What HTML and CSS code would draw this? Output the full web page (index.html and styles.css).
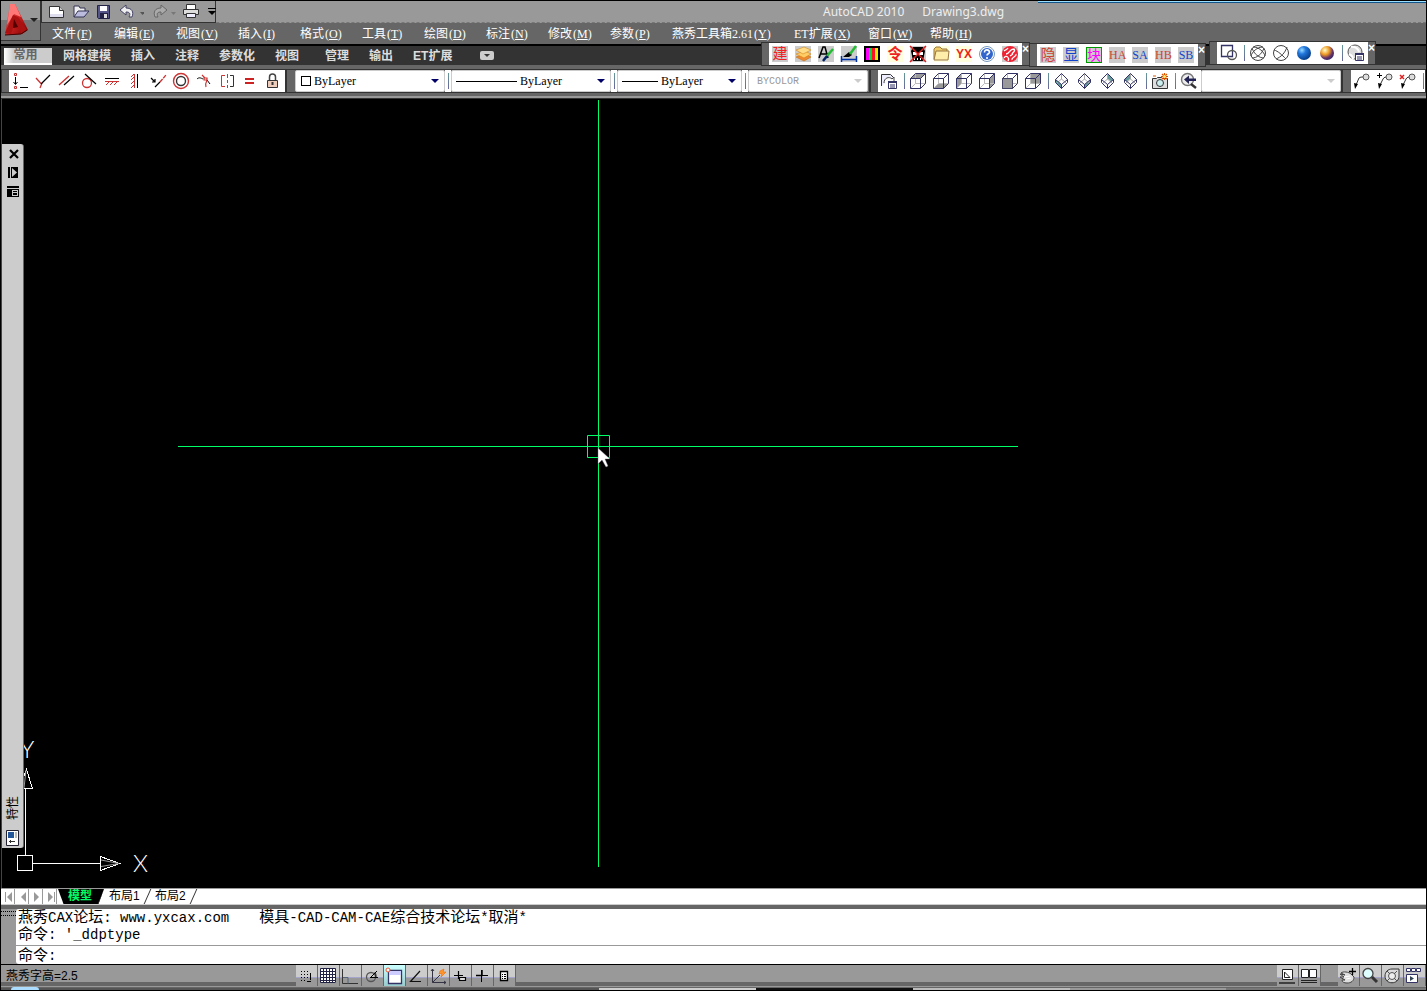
FILE: index.html
```html
<!DOCTYPE html>
<html lang="zh-CN">
<head>
    <meta charset="UTF-8">
    <meta name="viewport" content="width=device-width, initial-scale=1.0">
    <title>AutoCAD 2010 - Drawing3.dwg</title>
    <link rel="stylesheet" href="styles.css">
</head>
<body>

    <svg class="defs" width="0" height="0" aria-hidden="true">
        <symbol id="cubo" viewBox="0 0 23 22">
            <path d="M8.500 3.500v10h10M8.500 13.500l-5 5" fill="none" stroke="#bbb"/>
            <path d="M3.500 8.500h10v10h-10zM3.500 8.500l5-5h10l-5 5M18.500 3.500v10l-5 5" fill="none" stroke="#336"/>
        </symbol>
        <symbol id="iso" viewBox="0 0 23 22">
            <path d="M10.500 3.500v6M6 13l4.500-4 4.500 4" fill="none" stroke="#aaa"/>
            <path d="M10.500 3.500l6 6v3l-6 6-6-6v-3zM4.500 9.500l6 5 6-5M10.500 14.500v4" fill="none" stroke="#336"/>
        </symbol>
        <linearGradient id="rojo" x1="0" y1="0" x2="1" y2="1">
            <stop offset="0" stop-color="#f66"/><stop offset=".5" stop-color="#c22"/><stop offset="1" stop-color="#700"/>
        </linearGradient>
        <radialGradient id="azul" cx=".35" cy=".3" r=".8">
            <stop offset="0" stop-color="#9df"/><stop offset=".35" stop-color="#27d"/><stop offset="1" stop-color="#037"/>
        </radialGradient>
        <radialGradient id="oro" cx=".35" cy=".3" r=".8">
            <stop offset="0" stop-color="#ffc"/><stop offset=".4" stop-color="#e92"/><stop offset=".7" stop-color="#636"/><stop offset="1" stop-color="#226"/>
        </radialGradient>
    </svg>

    <div class="app">
        <header class="top">
            <button class="app-button" aria-label="AutoCAD">
                <svg width="39" height="39" viewBox="0 0 39 39">
                    <path d="M9 3h5l13 26-6 4-17 1z" fill="url(#rojo)"/>
                    <path d="M9 3h5l6 13-7-3-7 11z" fill="#f77"/>
                    <path d="M4 32l8-18 5 2 9 13-6 4-1-5-7-1-2 6z" fill="#a11"/>
                    <path d="M13 18l4 8-5 1z" fill="#500"/>
                    <path d="M4 34l16-1 6-4" fill="none" stroke="#400"/>
                    <path d="M29 17h8l-4 4z" fill="#222"/>
                </svg>
            </button>
            <div class="bars">
                <div class="title-bar">
                    <div class="quick">
                        <button aria-label="新建"><svg width="18" height="20" viewBox="0 0 18 20"><path d="M1.500 5.500h10l4 4v7h-14z" fill="#fff" stroke="#333"/><path d="M11.500 5.500v4h4" fill="#ccc" stroke="#333"/><path d="M2 13h13v3H2z" fill="#dde"/></svg></button>
                        <button aria-label="打开"><svg width="18" height="20" viewBox="0 0 18 20"><path d="M2 16V5h5l1 2h5v3" fill="#eee" stroke="#335"/><path d="M2 16l4-6h11l-5 6z" fill="#bbd" stroke="#335"/></svg></button>
                        <button aria-label="保存"><svg width="16" height="20" viewBox="0 0 16 20"><path d="M1.500 4.500h12v13h-11l-1-1z" fill="#558" stroke="#224"/><path d="M4 5h7v5H4z" fill="#fff"/><path d="M4 12h8v5H4z" fill="#224"/><path d="M8 13h3v4H8z" fill="#ddd"/></svg></button>
                        <button aria-label="放弃"><svg width="26" height="20" viewBox="0 0 26 20"><path d="M2 9l6-5v3c6 0 8 4 6 9h-3c2-4 0-5-3-5v3z" fill="#eee" stroke="#446"/><path d="M22 11h5l-2.500 3z" fill="#555"/></svg></button>
                        <button aria-label="重做"><svg width="26" height="20" viewBox="0 0 26 20"><path d="M17 9l-6-5v3c-6 0-8 4-6 9h3c-2-4 0-5 3-5v3z" fill="#aaa" stroke="#666"/><path d="M21 11h5l-2.500 3z" fill="#777"/></svg></button>
                        <button aria-label="打印"><svg width="18" height="20" viewBox="0 0 18 20"><path d="M4.500 3.500h9v5h-9z" fill="#fff" stroke="#333"/><path d="M1.500 8.500h15v5h-15z" fill="#ddd" stroke="#333"/><path d="M4.500 12.500h9v4h-9z" fill="#eef" stroke="#333"/></svg></button>
                        <button aria-label="自定义"><svg width="12" height="20" viewBox="0 0 12 20"><path d="M2 7h8v1H2zM2 10h8l-4 4z" fill="#000"/></svg></button>
                    </div>
                    <h1 class="title"><span>AutoCAD 2010</span><span>Drawing3.dwg</span></h1>
                </div>
                <nav class="menu">
                    <button>文件<span>(<u>F</u>)</span></button>
                    <button>编辑<span>(<u>E</u>)</span></button>
                    <button>视图<span>(<u>V</u>)</span></button>
                    <button>插入<span>(<u>I</u>)</span></button>
                    <button>格式<span>(<u>O</u>)</span></button>
                    <button>工具<span>(<u>T</u>)</span></button>
                    <button>绘图<span>(<u>D</u>)</span></button>
                    <button>标注<span>(<u>N</u>)</span></button>
                    <button>修改<span>(<u>M</u>)</span></button>
                    <button>参数<span>(<u>P</u>)</span></button>
                    <button class="long">燕秀工具箱2.61<span>(<u>Y</u>)</span></button>
                    <button>ET扩展<span>(<u>X</u>)</span></button>
                    <button>窗口<span>(<u>W</u>)</span></button>
                    <button>帮助<span>(<u>H</u>)</span></button>
                </nav>
            </div>
        </header>

        <nav class="ribbon">
            <button class="active">常用</button>
            <button>网格建模</button>
            <button>插入</button>
            <button>注释</button>
            <button>参数化</button>
            <button class="wide">视图</button>
            <button>管理</button>
            <button>输出</button>
            <button>ET扩展</button>
            <button class="ribbon-min" aria-label="最小化"></button>
        </nav>

        <!-- Barras flotantes -->
        <div class="floating float-yx">
            <div class="tools">
                <button class="tool"><b class="glyph red">建</b></button>
                <button class="tool" aria-label="图层"><svg width="23" height="22" viewBox="0 0 23 22"><path d="M3 3h16v16H3z" fill="#ccc"/><path d="M4 14l9-3 6 3-7 4z" fill="#e83" stroke="#b60" stroke-width=".5"/><path d="M4 11l9-3 6 3-7 4z" fill="#fc6" stroke="#c70" stroke-width=".5"/><path d="M4 7l8-3 7 3-8 4z" fill="#fd8" stroke="#c70" stroke-width=".5"/></svg></button>
                <button class="tool" aria-label="文字样式"><svg width="23" height="22" viewBox="0 0 23 22"><path d="M3 3h16v16H3z" fill="#ccc"/><path d="M4 15l4-11h2l3 11M5 11h8" fill="none" stroke="#000" stroke-width="1.500"/><path d="M12 13l6-7" stroke="#2b3" stroke-width="2.500"/><path d="M8 18l4-5" stroke="#026" stroke-width="2.500"/></svg></button>
                <button class="tool" aria-label="标注样式"><svg width="23" height="22" viewBox="0 0 23 22"><path d="M3 3h16v16H3z" fill="#ccc"/><path d="M3.500 13v6M18.500 13v6M4 16.500h14" stroke="#03a" stroke-width="1.500"/><path d="M5 14l6-5 3 3-3 2z" fill="#000"/><path d="M12 11l6-8" stroke="#2b3" stroke-width="2.500"/></svg></button>
                <button class="tool" aria-label="颜色"><svg width="23" height="22" viewBox="0 0 23 22"><path d="M3 3h16v16H3z"/><path d="M5 5h3v12H5z" fill="#f0f"/><path d="M8 5h3v12H8z" fill="#0d3"/><path d="M11 5h3v12h-3z" fill="#f12"/><path d="M14 5h3v12h-3z" fill="#ee0"/></svg></button>
                <button class="tool"><b class="glyph red cream bold">令</b></button>
                <button class="tool" aria-label="清理"><svg width="23" height="22" viewBox="0 0 23 22"><path d="M3 3h16v16H3z" fill="#ccc"/><path d="M6 4h10l2 4-2 10H6L4 8z"/><path d="M6 9h4v3H6zM12 9h4v3h-4zM7 15h1v2H7zm3 0h1v2h-1zm3 0h1v2h-1z" fill="#fff"/><path d="M3 3l16 16M19 3L3 19" stroke="#d22" stroke-width="1.500"/></svg></button>
                <button class="tool" aria-label="文件夹"><svg width="23" height="22" viewBox="0 0 23 22"><path d="M3 3h16v16H3z" fill="#ffd"/><path d="M4 16V6l2-2h4l2 2h5v10z" fill="#ec6" stroke="#974"/><path d="M6 8h13l-1 9H4z" fill="#fea" stroke="#974"/></svg></button>
                <button class="tool"><b class="glyph red cream bold small">YX</b></button>
                <button class="tool" aria-label="帮助"><svg width="23" height="22" viewBox="0 0 23 22"><circle cx="11" cy="11" r="7.500" fill="#fff" stroke="#79b"/><circle cx="11" cy="11" r="6" fill="#36c"/><path d="M8.500 9.500c0-4 5-3 5 0 0 1-2.500 1-2.500 3M11 14v2" fill="none" stroke="#fff" stroke-width="1.600"/></svg></button>
                <button class="tool" aria-label="燕秀"><svg width="23" height="22" viewBox="0 0 23 22"><path d="M3 3h16v16H3z" fill="#ccc"/><circle cx="11" cy="11" r="8" fill="#e23"/><path d="M5 8c2-2 3-1 4-3M7 11c4 0 3-5 8-5 2 2-1 3-2 5M5 15c2-4 6 0 4 3M13 17c-1-3 5-3 4-6M11 13l3-2" fill="none" stroke="#fff" stroke-width="1.300"/></svg></button>
            </div>
            <button class="close" aria-label="关闭">×</button>
        </div>
        <div class="floating float-sel">
            <div class="tools">
                <button class="tool"><b class="glyph brick">隐</b></button>
                <button class="tool"><b class="glyph blue">显</b></button>
                <button class="tool"><b class="glyph pink boxed">块</b></button>
                <button class="tool"><b class="glyph brick serif">HA</b></button>
                <button class="tool"><b class="glyph blue serif">SA</b></button>
                <button class="tool"><b class="glyph brick serif">HB</b></button>
                <button class="tool"><b class="glyph blue serif">SB</b></button>
            </div>
            <button class="close" aria-label="关闭">×</button>
        </div>
        <div class="floating float-vis">
            <div class="tools">
                <button class="tool" aria-label="二维线框"><svg width="23" height="22" viewBox="0 0 23 22"><path d="M3.500 3.500h11v11h-11z" fill="none" stroke="#336" stroke-width="1.300"/><circle cx="14" cy="13" r="4.500" fill="none" stroke="#555" stroke-width="1.300"/></svg></button>
                <i class="sep"></i>
                <button class="tool" aria-label="三维线框"><svg width="23" height="22" viewBox="0 0 23 22"><g fill="none" stroke="#444"><circle cx="11" cy="11" r="7.500"/><path d="M5 6c2 6 7 10 12 10M17 6c-2 6-7 10-12 10M6 5c6 0 11 5 12 9M16 5C10 5 5 10 4 14"/></g></svg></button>
                <button class="tool" aria-label="三维隐藏"><svg width="23" height="22" viewBox="0 0 23 22"><g fill="none" stroke="#444"><circle cx="11" cy="11" r="7.500"/><path d="M4 8c4 1 8 5 12 9M17 5c-2 6-6 10-11 12"/></g></svg></button>
                <button class="tool" aria-label="真实"><svg width="23" height="22" viewBox="0 0 23 22"><circle cx="11" cy="11" r="7" fill="url(#azul)"/></svg></button>
                <button class="tool" aria-label="概念"><svg width="23" height="22" viewBox="0 0 23 22"><circle cx="11" cy="11" r="7" fill="url(#oro)"/></svg></button>
                <i class="sep"></i>
                <button class="tool" aria-label="管理视觉样式"><svg width="23" height="22" viewBox="0 0 23 22"><circle cx="10" cy="10" r="7" fill="#ddd" stroke="#555"/><path d="M6 5c3-1 7 1 8 5M4 12c2 1 4 3 4 5" fill="none" stroke="#fff" stroke-width="2"/><path d="M10.500 11.500h8v7h-8z" fill="#fff" stroke="#336"/><path d="M10 11h9v2h-9zM12 14.500h5v1h-5zM12 16.500h5v1h-5z" fill="#336"/></svg></button>
            </div>
            <button class="close" aria-label="关闭">×</button>
        </div>

        <div class="toolbars">
            <div class="toolbar">
                <div class="tools">
                    <button class="tool" aria-label="重合"><svg width="23" height="22" viewBox="0 0 23 22"><path d="M5.500 3.500h2v2h-2zM5.500 16.500h2v2h-2z" fill="none" stroke="#c33"/><path d="M6.500 7v7M4.500 12l2 2.500 2-2.500M11 17.500h8" fill="none" stroke="#000"/></svg></button>
                    <button class="tool" aria-label="垂直"><svg width="23" height="22" viewBox="0 0 23 22"><path d="M4 8l5 5.500M8 18l2-5" stroke="#c33" stroke-width="1.300"/><path d="M18 5l-9 9" stroke="#000" stroke-width="1.200"/></svg></button>
                    <button class="tool" aria-label="平行"><svg width="23" height="22" viewBox="0 0 23 22"><path d="M4 15l10-9" stroke="#c33" stroke-width="1.400"/><path d="M9 15l10-9" stroke="#000" stroke-width="1.200"/></svg></button>
                    <button class="tool" aria-label="相切"><svg width="23" height="22" viewBox="0 0 23 22"><circle cx="9" cy="13" r="4.500" fill="none" stroke="#c33" stroke-width="1.300"/><path d="M7 4l11 10" stroke="#000" stroke-width="1.200"/></svg></button>
                    <button class="tool" aria-label="水平"><svg width="23" height="22" viewBox="0 0 23 22"><path d="M4 8.500h14" stroke="#000"/><path d="M4 11.500h14M8 12l-3 3M12 12l-3 3M16 12l-3 3" stroke="#c33"/></svg></button>
                    <button class="tool" aria-label="竖直"><svg width="23" height="22" viewBox="0 0 23 22"><path d="M10.500 4v14M10 7l-3 3M10 11l-3 3M10 15l-3 3M10 4L7 7" stroke="#c33"/><path d="M13.500 4v14" stroke="#000"/></svg></button>
                    <button class="tool" aria-label="共线"><svg width="23" height="22" viewBox="0 0 23 22"><path d="M4 8l4 4M5 12h3V9M8 17l5-5" fill="none" stroke="#000" stroke-width="1.200"/><path d="M13 12l6-7" stroke="#c33" stroke-width="1.300" stroke-dasharray="4 1"/></svg></button>
                    <button class="tool" aria-label="同心"><svg width="23" height="22" viewBox="0 0 23 22"><circle cx="11" cy="11" r="7.500" fill="none" stroke="#c33" stroke-width="1.400"/><circle cx="11" cy="11" r="4.500" fill="none" stroke="#333" stroke-width="1.400"/></svg></button>
                    <button class="tool" aria-label="平滑"><svg width="23" height="22" viewBox="0 0 23 22"><path d="M4 9c2-2 4-1 6 0M14 10l3 4" fill="none" stroke="#000"/><path d="M9 5l3 3M11 8h3v2h-3zM14 10c-1 2-2 4-1 7" fill="none" stroke="#c33" stroke-width="1.200"/></svg></button>
                    <button class="tool" aria-label="对称"><svg width="23" height="22" viewBox="0 0 23 22"><path d="M9 5.500H5.500v11H9M11.500 4v4M11.500 10v3M11.500 15v3" fill="none" stroke="#c33"/><path d="M14 5.500h3.500v11H14" fill="none" stroke="#333"/></svg></button>
                    <button class="tool" aria-label="相等"><svg width="23" height="22" viewBox="0 0 23 22"><path d="M6 9h9M6 13h9" stroke="#c22" stroke-width="2"/></svg></button>
                    <button class="tool" aria-label="固定"><svg width="23" height="22" viewBox="0 0 23 22"><path d="M7.500 11V7c0-4 6-4 6 0v4" fill="none" stroke="#444" stroke-width="1.500"/><path d="M5.500 10.500h10v7h-10z" fill="#ecb" stroke="#333"/><path d="M10.500 12v3" stroke="#333" stroke-width="2"/></svg></button>
                </div>
            </div>

            <div class="toolbar props">
                <label class="combo color"><i class="swatch"></i><select aria-label="颜色"><option>ByLayer</option></select></label>
                <i class="sep"></i>
                <label class="combo line"><i class="stroke"></i><select aria-label="线型"><option>ByLayer</option></select></label>
                <i class="sep"></i>
                <label class="combo weight"><i class="stroke"></i><select aria-label="线宽"><option>ByLayer</option></select></label>
                <i class="sep"></i>
                <label class="combo plot off"><select aria-label="打印样式" disabled><option>BYCOLOR</option></select></label>
            </div>

            <div class="toolbar">
                <div class="tools">
                    <button class="tool" aria-label="命名视图"><svg width="23" height="22" viewBox="0 0 23 22"><path d="M3.500 16V4.500h9l3 3" fill="#eef" stroke="#333"/><path d="M6 13c0-5 5-7 8-4l2-2v6h-6l2-2" fill="#fff" stroke="#444"/><path d="M10.500 11.500h8v7h-8z" fill="#fff" stroke="#336"/><path d="M10 11h9v2h-9zM12 14.500h5v1h-5zM12 16.500h5v1h-5z" fill="#336"/></svg></button>
                    <i class="sep"></i>
                    <button class="tool" aria-label="俯视"><svg width="23" height="22" viewBox="0 0 23 22"><path d="M3.500 8.500l5-5h10l-5 5z" fill="#999"/><use href="#cubo"/></svg></button>
                    <button class="tool" aria-label="仰视"><svg width="23" height="22" viewBox="0 0 23 22"><path d="M3.500 18.500l5-5h10l-5 5z" fill="#999"/><use href="#cubo"/></svg></button>
                    <button class="tool" aria-label="左视"><svg width="23" height="22" viewBox="0 0 23 22"><path d="M3.500 8.500l5-5v10l-5 5z" fill="#999"/><use href="#cubo"/></svg></button>
                    <button class="tool" aria-label="右视"><svg width="23" height="22" viewBox="0 0 23 22"><path d="M13.500 8.500l5-5v10l-5 5z" fill="#999"/><use href="#cubo"/></svg></button>
                    <button class="tool" aria-label="前视"><svg width="23" height="22" viewBox="0 0 23 22"><use href="#cubo"/><path d="M3.500 8.500h10v10h-10z" fill="#999" stroke="#446"/></svg></button>
                    <button class="tool" aria-label="后视"><svg width="23" height="22" viewBox="0 0 23 22"><path d="M8.500 3.500h10v10h-10z" fill="#999"/><use href="#cubo"/></svg></button>
                    <i class="sep"></i>
                    <button class="tool" aria-label="西南等轴测"><svg width="23" height="22" viewBox="0 0 23 22"><path d="M4.500 9.500l6 5v4l-6-6z" fill="#699"/><use href="#iso"/></svg></button>
                    <button class="tool" aria-label="东南等轴测"><svg width="23" height="22" viewBox="0 0 23 22"><path d="M16.500 9.500l-6 5v4l6-6z" fill="#699"/><use href="#iso"/></svg></button>
                    <button class="tool" aria-label="东北等轴测"><svg width="23" height="22" viewBox="0 0 23 22"><path d="M10.500 3.500l6 6-2 2-4-3z" fill="#699"/><use href="#iso"/></svg></button>
                    <button class="tool" aria-label="西北等轴测"><svg width="23" height="22" viewBox="0 0 23 22"><path d="M10.500 3.500l-6 6 2 2 4-3z" fill="#699"/><use href="#iso"/></svg></button>
                    <i class="sep"></i>
                    <button class="tool" aria-label="相机"><svg width="23" height="22" viewBox="0 0 23 22"><path d="M3.500 8.500h4l1-1h4l1 1h5v10h-15z" fill="#ddd" stroke="#333"/><circle cx="11" cy="13" r="3.500" fill="#cee" stroke="#333"/><path d="M4 6h3M15.500 3v7M12 6.500h7M13 4l5 5M18 4l-5 5" stroke="#d50" stroke-width="1.200"/><circle cx="15.500" cy="6.500" r="1.500" fill="#fe6"/></svg></button>
                    <i class="sep"></i>
                    <button class="tool" aria-label="上一个"><svg width="23" height="22" viewBox="0 0 23 22"><circle cx="9.500" cy="9.500" r="6" fill="#eee" stroke="#777" stroke-width="1.400"/><path d="M13 14l5 4" stroke="#333" stroke-width="2.500"/><path d="M6 9.500l5-4v3h7v2.500h-7v3z" fill="#225"/></svg></button>
                </div>
                <label class="combo view off"><select aria-label="视图" disabled><option></option></select></label>
            </div>

            <div class="toolbar last">
                <div class="tools">
                    <button class="tool" aria-label="多重引线"><svg width="23" height="22" viewBox="0 0 23 22"><path d="M5 15l3-7c1-1 3-1 4-1" fill="none" stroke="#333"/><path d="M3 13l4 1-3 5z"/><circle cx="15" cy="7" r="3" fill="#ddd" stroke="#555"/></svg></button>
                    <button class="tool" aria-label="添加引线"><svg width="23" height="22" viewBox="0 0 23 22"><path d="M3 5.500h5M5.500 3v5" stroke="#000"/><path d="M6 15l3-6c1-2 3-2 4-2" fill="none" stroke="#333"/><path d="M4 13l4 1-3 5z"/><circle cx="15" cy="7" r="3" fill="#ddd" stroke="#555"/></svg></button>
                    <button class="tool" aria-label="删除引线"><svg width="23" height="22" viewBox="0 0 23 22"><path d="M3 5l4 4M7 5L3 9" stroke="#d22" stroke-width="1.500"/><path d="M6 15l3-6c1-2 3-2 4-2" fill="none" stroke="#333"/><path d="M4 13l4 1-3 5z"/><circle cx="15" cy="7" r="3" fill="#ddd" stroke="#555"/></svg></button>
                    <i class="sep"></i>
                </div>
            </div>
        </div>

        <main class="canvas">
            <svg class="crosshair" width="841" height="768" viewBox="0 0 841 768">
                <path d="M0 346h840v1H0zM420 0h1v767h-1z" fill="#00ff66"/>
                <path d="M409.500 335.500h22v22h-22z" fill="none" stroke="#00ff66"/>
                <path d="M420 348v16l4-4 4 7 2-1-3-7h5z" fill="#fff" stroke="#667" stroke-width=".4"/>
            </svg>

            <svg class="ucs" width="140" height="140" viewBox="0 0 140 140">
                <g fill="none" stroke="#fff">
                    <path d="M1.500 117.500h15v15h-15zM9.500 117V50M17 125.500h67M84.500 118.500v14l19-7zM3.500 50.500h13l-6-19z" shape-rendering="crispEdges"/>
                    <path d="M85 122l18 3.500-18 3M8 50l2-18" stroke="#999"/>
                </g>
                <text x="117" y="134">X</text>
                <text x="4" y="20">Y</text>
            </svg>

            <aside class="palette">
                <button aria-label="关闭"><svg width="14" height="18" viewBox="0 0 14 18"><path d="M4 6l8 8M12 6l-8 8" stroke="#000" stroke-width="2.200"/></svg></button>
                <button aria-label="自动隐藏"><svg width="14" height="18" viewBox="0 0 14 18"><path d="M2 4h2v11H2zM5 4h7v11H5z"/><path d="M6 5l5 4.500-5 4.500z" fill="#ccc"/></svg></button>
                <button aria-label="特性"><svg width="14" height="18" viewBox="0 0 14 18"><path d="M1 4h12v2H1zM1 7h12v8H1z"/><path d="M7 8h5v1H7zM7 10h5v1H7zM7 13h5v1H7zM6 8h1v6H6zM12 8v6h-1V8z" fill="#ccc"/></svg></button>
                <span class="palette-name">特性</span>
                <svg class="palette-icon" width="14" height="18" viewBox="0 0 14 18"><path d="M.5 1.500h12v15H.5z" fill="#fff" stroke="#223"/><path d="M2 3h6v6H2z" fill="#259"/><path d="M9 3h2v6H9z" fill="#bbb"/><path d="M3 12.500h6M4.500 11v3" stroke="#333"/></svg>
            </aside>
        </main>

        <nav class="layouts">
            <button class="step" aria-label="第一个"><svg width="14" height="14" viewBox="0 0 14 14"><path d="M4 2h1v10H4zM11 2v10L6 7z" fill="#999"/></svg></button>
            <button class="step" aria-label="上一个"><svg width="14" height="14" viewBox="0 0 14 14"><path d="M11 2v10L6 7z" fill="#999"/></svg></button>
            <button class="step" aria-label="下一个"><svg width="14" height="14" viewBox="0 0 14 14"><path d="M5 2v10l5-5z" fill="#999"/></svg></button>
            <button class="step" aria-label="最后一个"><svg width="14" height="14" viewBox="0 0 14 14"><path d="M5 2v10l5-5zM11 2h1v10h-1z" fill="#999"/></svg></button>
            <button class="layout current">模型</button>
            <button class="layout">布局1</button>
            <button class="layout">布局2</button>
        </nav>

        <section class="command">
            <div class="grip"></div>
            <div class="console">
                <p>燕秀<span>CAX</span>论坛<span>: www.yxcax.com</span><b class="forum">模具<span>-CAD-CAM-CAE</span>综合技术论坛<span>*</span>取消<span>*</span></b></p>
                <p>命令<span>: '_ddptype</span></p>
                <label class="prompt">命令<span>:</span><input type="text" aria-label="命令"></label>
            </div>
        </section>

        <footer class="status">
            <div class="coords">燕秀字高=2.5</div>
            <div class="group">
                <button aria-label="捕捉"><svg width="21" height="20" viewBox="0 0 21 20"><path d="M5 5.500h9M5 8.500h9M5 11.500h9M5 14.500h6" stroke="#000" stroke-dasharray="1 2"/><path d="M14.500 7v7M11 15.500h4" stroke="#000"/></svg></button>
                <button aria-label="栅格"><svg width="21" height="20" viewBox="0 0 21 20"><path d="M3 3h15v14H3z" fill="#fff"/><path d="M2.500 2.500h15v14h-15zM5.500 2v15M8.500 2v15M11.500 2v15M14.500 2v15M2 5.500h16M2 8.500h16M2 11.500h16M2 14.500h16" fill="none" stroke="#224"/></svg></button>
                <button aria-label="正交"><svg width="21" height="20" viewBox="0 0 21 20"><path d="M2.500 3v14.500H18" fill="none" stroke="#333"/><path d="M3 11.500h5v6" fill="none" stroke="#567"/></svg></button>
                <button aria-label="极轴"><svg width="21" height="20" viewBox="0 0 21 20"><circle cx="9" cy="11" r="4.500" fill="none" stroke="#555" stroke-width="1.300"/><path d="M9 11.500h7M8 12l7-7M13 6c1 2 1 4 1 5" fill="none" stroke="#000"/></svg></button>
                <button class="on" aria-label="对象捕捉"><svg width="21" height="20" viewBox="0 0 21 20"><path d="M4.500 4.500h13v13h-13z" fill="#fff" stroke="#336" stroke-width="1.300"/><path d="M5 5h12v4H5z" fill="#ccf"/><circle cx="4" cy="4" r="2" fill="#fff" stroke="#e53"/></svg></button>
                <button aria-label="对象追踪"><svg width="21" height="20" viewBox="0 0 21 20"><path d="M14 5L4.500 15.500H15" fill="none" stroke="#111" stroke-width="1.200"/></svg></button>
                <button aria-label="动态UCS"><svg width="21" height="20" viewBox="0 0 21 20"><path d="M4.500 3v13.500H18M4.500 16.500L12 9M3 5l1.500-2L6 5M16 15l2 1.500-2 1.500" fill="none" stroke="#334"/><path d="M12 5l4-2-1 3h3l-5 5 1-4-3 1z" fill="#f93" stroke="#e60" stroke-width=".6"/></svg></button>
                <button aria-label="动态输入"><svg width="21" height="20" viewBox="0 0 21 20"><path d="M4 9.500h9M8.500 5v8" stroke="#000" stroke-width="1.200"/><path d="M9.500 11.500h6v3h-6z" fill="#ddd" stroke="#000" stroke-width="1.200"/></svg></button>
                <button aria-label="线宽"><svg width="21" height="20" viewBox="0 0 21 20"><path d="M4 9.500h12M9.500 4v12" stroke="#000"/><path d="M4 9.500h6V4" fill="none" stroke="#000" stroke-width="1.500"/></svg></button>
                <button aria-label="快捷特性"><svg width="21" height="20" viewBox="0 0 21 20"><path d="M6.500 5.500h7v9h-7z" fill="#fff" stroke="#000" stroke-width="1.300"/><path d="M8 8.500h1M10 8.500h2M8 10.500h1M10 10.500h2M8 12.500h1M10 12.500h2" stroke="#000"/></svg></button>
            </div>
            <div class="group right">
                <button aria-label="模型"><svg width="21" height="20" viewBox="0 0 21 20"><path d="M5.500 3.500h10v10h-10z" fill="#fff" stroke="#222"/><path d="M7.500 6v5.500H13z" fill="none" stroke="#222"/><path d="M2 17h16" stroke="#222" stroke-width="1.500"/></svg></button>
                <button aria-label="快速查看布局"><svg width="21" height="20" viewBox="0 0 21 20"><path d="M2.500 3.500h7v8h-7zM10.500 3.500h7v8h-7z" fill="#fff" stroke="#222"/><path d="M2 14.500h16M2 16.500h16" stroke="#222"/></svg></button>
            </div>
            <div class="group">
                <button aria-label="平移"><svg width="21" height="20" viewBox="0 0 21 20"><path d="M2 8l5 1-4-2c2-2 8-1 10 1l3 3c0 4-3 6-7 6-3 0-5-1-5-3h3l-5-3h4z" fill="#ddd" stroke="#444"/><path d="M6 11l6-1M8 13l5-1" stroke="#fff"/><path d="M11 5.500h7M14.500 2v7" stroke="#000" stroke-width="1.300"/></svg></button>
                <button aria-label="缩放"><svg width="21" height="20" viewBox="0 0 21 20"><circle cx="8" cy="7.500" r="5" fill="#dff" stroke="#444" stroke-width="1.300"/><path d="M12 11l5 5" stroke="#333" stroke-width="3"/></svg></button>
                <button aria-label="控制盘"><svg width="21" height="20" viewBox="0 0 21 20"><path d="M10 3h7v7c0 9-14 9-14 0 0-4 3-7 7-7z" fill="#ddd" stroke="#333"/><circle cx="10" cy="10" r="3.500" fill="#eee" stroke="#555"/><path d="M5 5l3 3M15 5l-3 3M5 15l3-3M15 15l-3-3" stroke="#555"/></svg></button>
                <button aria-label="运动"><svg width="21" height="20" viewBox="0 0 21 20"><path d="M2.500 2.500h4v3h-4zM7.500 2.500h4v3h-4zM12.500 2.500h4v3h-4zM2.500 8.500h11v8h-11z" fill="#fff" stroke="#336"/><path d="M6 10v5l4-2.500z" fill="#345"/></svg></button>
            </div>
        </footer>
        <div class="taskbar"><i class="orb"></i></div>
    </div>

</body>
</html>
```
FILE: styles.css
```css
* {
    box-sizing: border-box;
}
body {
    margin: 0;
    background-color: #000;
    font-family: "Liberation Sans", "Noto Sans CJK SC", sans-serif;
    font-size: 12px;
}
button {
    margin: 0;
    padding: 0;
    border: none;
    background: none;
    color: inherit;
    font: inherit;
    white-space: nowrap;
}
svg {
    display: block;
}
.defs {
    position: absolute;
}
.app {
    position: relative;
    display: flex;
    flex-direction: column;
    height: 100vh;
    border: 1px solid #000;
    background-color: #666;
    overflow: hidden;
}
/* Borde de la ventana de atrás */
.app::before {
    content: "";
    position: absolute;
    top: 0;
    right: 0;
    width: 388px;
    height: 2px;
    background: linear-gradient(#9df 0 1px, #158 1px);
}

/* Título y menú */
.top {
    display: flex;
    height: 43px;
    flex: none;
}
.app-button {
    width: 40px;
    height: 40px;
    background: linear-gradient(#999 0 50%, #777 50%);
    border: 1px solid #333;
    border-left: none;
    border-top: none;
}
.bars {
    flex: 1;
}
.title-bar {
    display: flex;
    align-items: center;
    height: 22px;
    background-color: #999;
    border-bottom: 1px dashed #777;
}
.quick {
    display: flex;
    align-items: center;
    gap: 6px;
    width: 175px;
    height: 22px;
    padding-left: 6px;
    border: 1px solid #333;
    border-top: none;
}
.title {
    display: flex;
    gap: 18px;
    margin: 0 0 0 607px;
    color: #eee;
    font: 12px "Noto Sans", sans-serif;
}
.menu {
    display: flex;
    gap: 20px;
    height: 20px;
    padding-left: 11px;
    color: #fff;
    font-family: "Liberation Serif", "Noto Sans CJK SC", serif;
}
.menu button {
    width: 42px;
    text-align: left;
}
.menu button.long {
    width: 102px;
}
.menu .long + button {
    width: 54px;
}
.menu span {
    padding-left: 1px;
}

/* Cinta */
.ribbon {
    display: flex;
    gap: 20px;
    flex: none;
    height: 21px;
    padding-left: 3px;
    border-top: 2px solid #000;
    background-color: #333;
    color: #ddd;
    font-weight: bold;
}
.ribbon button {
    height: 17px;
}
.ribbon .active {
    align-self: flex-end;
    width: 48px;
    height: 17px;
    margin-right: -9px;
    padding-right: 5px;
    background: linear-gradient(90deg, #fff, #ccc 20%);
    border-bottom: 2px solid #fff;
    color: #666;
    line-height: 15px;
}
.ribbon .wide {
    margin-right: 6px;
}
.ribbon .ribbon-min {
    align-self: center;
    width: 14px;
    height: 9px;
    margin-left: 8px;
    border-radius: 2px;
    background-color: #ccc;
}
.ribbon-min::after {
    content: "";
    display: block;
    width: 0;
    margin: 0 auto;
    border: 3px solid transparent;
    border-top-color: #333;
    border-bottom: none;
}

/* Barras de herramientas */
.toolbars {
    display: flex;
    flex: none;
    height: 34px;
    padding-top: 4px;
    border-bottom: 1px solid #333;
    background: linear-gradient(#666 0 28px, #666 31px, #999 31px);
}
.toolbar {
    display: flex;
    height: 24px;
    padding-left: 7px;
    border: 1px solid #333;
    flex: none;
}
.toolbar.last {
    flex: 1;
    padding-left: 8px;
    overflow: hidden;
}
.tools {
    display: flex;
    flex: none;
    background-color: #fff;
}
.last .tools {
    width: 100%;
}
.tool {
    width: 23px;
    height: 22px;
}
.sep {
    width: 6px;
    height: 22px;
    flex: none;
    background: linear-gradient(#699, #669) center / 1px 16px no-repeat #fff;
}
.combo {
    position: relative;
    display: flex;
    align-items: center;
    height: 22px;
    background-color: #fff;
    border: 1px solid #ccc;
    border-radius: 2px;
}
.combo::after {
    content: "";
    position: absolute;
    right: 5px;
    border: 4px solid transparent;
    border-top-color: #006;
    border-bottom: none;
}
.combo select {
    flex: 1;
    height: 20px;
    padding: 0 0 0 3px;
    appearance: none;
    border: none;
    background: none;
    color: #000;
    font: 12px "Liberation Serif", serif;
}
.combo.off::after {
    border-top-color: #ccc;
}
.combo.off select {
    padding-left: 8px;
    color: #999;
    font: 10px "Liberation Mono", monospace;
    opacity: 1;
}
.swatch {
    width: 10px;
    height: 10px;
    margin-left: 5px;
    border: 1px solid #000;
}
.stroke {
    height: 1px;
    margin-left: 4px;
    background-color: #000;
}
.props {
    padding-left: 8px;
    padding-right: 1px;
}
.color {
    width: 150px;
}
.line {
    width: 160px;
}
.line .stroke {
    width: 61px;
}
.weight {
    width: 125px;
}
.weight .stroke {
    width: 36px;
}
.plot {
    width: 120px;
}
.view {
    width: 140px;
}

.floating {
    position: absolute;
    z-index: 2;
    display: flex;
    height: 24px;
    padding-left: 7px;
    border: 1px solid #333;
    background-color: #666;
}
.float-yx {
    left: 760px;
    top: 41px;
}
.float-sel {
    left: 1028px;
    top: 42px;
}
.float-vis {
    left: 1208px;
    top: 40px;
}
.float-vis .tools {
    padding-left: 1px;
}
.close {
    align-self: flex-start;
    width: 7px;
    color: #fff;
    font-size: 12px;
    font-weight: bold;
    line-height: 12px;
}
.glyph {
    display: block;
    width: 16px;
    height: 16px;
    margin-left: 3px;
    background-color: #ccc;
    font-size: 15px;
    font-weight: normal;
    line-height: 16px;
}
.serif {
    font-family: "Liberation Serif", serif;
    font-size: 12px;
}
.bold {
    font-weight: bold;
}
.small {
    font-size: 12px;
}
.cream {
    background-color: #ffd;
}
.red {
    color: #e22;
}
.brick {
    color: #c43;
}
.blue {
    color: #14c;
}
.pink {
    color: #f0f;
}
.boxed {
    border: 1px solid #090;
    font-size: 14px;
    line-height: 14px;
}

/* Área de dibujo */
.canvas {
    position: relative;
    flex: 1;
    min-height: 0;
    border-left: 1px solid #444;
    background-color: #000;
    overflow: hidden;
}
.crosshair {
    position: absolute;
    left: 176px;
    top: 1px;
}
.ucs {
    position: absolute;
    left: 14px;
    bottom: 10px;
}
.ucs text {
    fill: #fff;
    font-family: Lato, sans-serif;
    font-size: 24px;
    font-weight: 300;
}
.palette {
    position: absolute;
    left: 0;
    top: 45px;
    bottom: 40px;
    display: flex;
    flex-direction: column;
    align-items: center;
    gap: 1px;
    width: 22px;
    padding-bottom: 1px;
    border-right: 1px solid #666;
    border-radius: 0 3px 3px 0;
    background-color: #ccc;
}
.palette-name {
    margin-top: auto;
    writing-mode: vertical-rl;
    text-orientation: sideways;
    transform: rotate(180deg);
    line-height: 18px;
}
.palette-icon {
    margin-top: 8px;
}

/* Pestañas de presentación */
.layouts {
    display: flex;
    flex: none;
    height: 17px;
    background-color: #fff;
    border-top: 1px solid #999;
    border-bottom: 1px solid #ccc;
}
.step {
    width: 14px;
    border-right: 1px solid #999;
}
.layout {
    position: relative;
    width: 46px;
    height: 15px;
    padding-left: 5px;
    color: #000;
    line-height: 13px;
    text-align: left;
}
.layout::after {
    content: "";
    position: absolute;
    right: 2px;
    top: 0;
    height: 15px;
    border-right: 1px solid #333;
    transform: skewX(-24deg);
}
.layout.current {
    margin-left: 1px;
    padding-left: 10px;
    background-color: #000;
    color: #00ff66;
    font-weight: bold;
    clip-path: polygon(0 0, 100% 0, 88% 100%, 12% 100%);
}

/* Línea de comandos */
.command {
    display: flex;
    flex: none;
    height: 59px;
    border-top: 4px solid #666;
    background-color: #999;
}
.grip {
    width: 15px;
    height: 5px;
    margin-top: 2px;
    border-top: 1px dotted #000;
    border-bottom: 1px dotted #000;
}
.console {
    flex: 1;
    background-color: #fff;
    border-radius: 3px 0 0 3px;
    font-family: "Noto Sans CJK SC", sans-serif;
    font-size: 15px;
}
.console p {
    height: 17px;
    margin: 0;
    padding-left: 2px;
    line-height: 13px;
}
.console span {
    font-family: "Liberation Mono", monospace;
    font-size: 14px;
    line-height: 13px;
}
.forum {
    margin-left: 30px;
    font-weight: normal;
}
.prompt {
    display: flex;
    align-items: baseline;
    height: 18px;
    margin-top: 2px;
    padding-left: 2px;
    border-top: 1px solid #999;
    line-height: 16px;
}
.prompt input {
    flex: 1;
    padding: 0;
    border: none;
    outline: none;
    background: none;
    font: 14px "Liberation Mono", monospace;
}

/* Barra de estado */
.status {
    display: flex;
    flex: none;
    height: 22px;
    border-top: 1px solid #000;
    background: linear-gradient(#999 0 17px, #666 17px);
}
.coords {
    width: 295px;
    padding-left: 5px;
    line-height: 22px;
}
.group {
    display: flex;
}
.group button {
    width: 22px;
    height: 21px;
    border-right: 1px solid #666;
    background: linear-gradient(#ccc 0 58%, #99c 60%, #999 64%);
}
.group .on {
    background: linear-gradient(#cff, #9cc);
}
.group.right {
    margin-left: auto;
    margin-right: 17px;
}
.taskbar {
    flex: none;
    height: 4px;
    border-top: 1px solid #999;
    background: linear-gradient(#666 0 1px, transparent 1px), linear-gradient(90deg, #555 0 42%, #ccc 42% 53%, #111 53% 64%, #bbb 64% 75%, #999 75% 86%, #777 86%);
}
.orb {
    display: block;
    width: 28px;
    height: 3px;
    margin-left: 10px;
    border-radius: 14px 14px 0 0;
    background-color: #adf;
}
```
